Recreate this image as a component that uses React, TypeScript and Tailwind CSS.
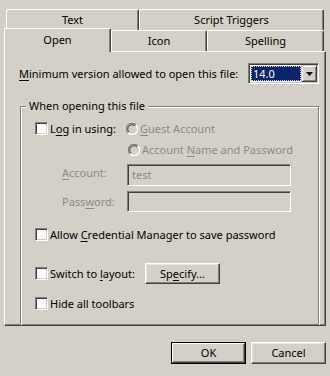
import React from "react";

const FONT = { fontFamily: '"Noto Sans", "Liberation Sans", Arial, sans-serif' };

function U({ children }: { children: React.ReactNode }) {
  return <span className="underline underline-offset-[2px] decoration-[1px]">{children}</span>;
}

function Tab({ w, label }: { w: string; label: string }) {
  return (
    <div className={`${w} h-full flex items-center justify-center border-t border-l border-white border-r border-r-[#404040] rounded-t-[2px] shadow-[inset_-1px_0_#808080] bg-[#d4d0c8]`}>
      <span className="leading-none -mt-[2px]">{label}</span>
    </div>
  );
}

function Check() {
  return (
    <div className="w-[13px] h-[13px] shrink-0 bg-white border-t border-l border-[#808080] border-r border-b border-r-white border-b-white shadow-[inset_1px_1px_#404040,inset_-1px_-1px_#d4d0c8]" />
  );
}

function Radio() {
  return (
    <svg width="12" height="12" viewBox="0 0 12 12" className="shrink-0">
      <circle cx="6" cy="6" r="5.5" fill="#d4d0c8" />
      <path d="M10 2 A5.5 5.5 0 0 0 2 10" stroke="#808080" strokeWidth="1.2" fill="none" />
      <path d="M9 3 A4.2 4.2 0 0 0 3 9" stroke="#404040" strokeWidth="1" fill="none" />
      <path d="M2 10 A5.5 5.5 0 0 0 10 2" stroke="#ffffff" strokeWidth="1.2" fill="none" />
    </svg>
  );
}

function Sunken({ className, children }: { className: string; children?: React.ReactNode }) {
  return (
    <div
      className={`${className} shrink-0 border-t border-l border-[#808080] border-r border-b border-r-white border-b-white shadow-[inset_1px_1px_#404040,inset_-1px_-1px_#d4d0c8]`}
    >
      {children}
    </div>
  );
}

function Button({ className, children, def }: { className: string; children: React.ReactNode; def?: boolean }) {
  if (def) {
    return (
      <div className={`${className} border border-black bg-[#d4d0c8] flex`}>
        <div className="flex-1 flex items-center justify-center border-t border-l border-white border-r border-b border-r-[#404040] border-b-[#404040] shadow-[inset_-1px_-1px_#808080]">
          <span className="leading-none -mt-[1px]">{children}</span>
        </div>
      </div>
    );
  }
  return (
    <div
      className={`${className} flex items-center justify-center bg-[#d4d0c8] border-t border-l border-white border-r border-b border-r-[#404040] border-b-[#404040] shadow-[inset_-1px_-1px_#808080,inset_1px_1px_#e8e6e0]`}
    >
      <span className="leading-none -mt-[1px]">{children}</span>
    </div>
  );
}

export default function App() {
  return (
    <div className="w-[330px] h-[376px] bg-[#d4d0c8] overflow-hidden text-[11px] text-black relative" style={FONT}>
      <div className="pt-[9px]">
        {/* back tab row */}
        <div className="flex pl-[6px] h-[21px]">
          <Tab w="w-[133px]" label="Text" />
          <Tab w="w-[185px]" label="Script Triggers" />
        </div>
        {/* front tab row */}
        <div className="flex pl-[4px] h-[21px] relative z-10">
          <div className="w-[107px] h-[24px] -mt-[2px] flex items-center justify-center border-t border-l border-white border-r border-r-[#404040] rounded-t-[2px] shadow-[inset_-1px_0_#808080] bg-[#d4d0c8]">
            <span className="leading-none -mt-[3px]">Open</span>
          </div>
          <Tab w="w-[96px]" label="Icon" />
          <Tab w="w-[117px]" label="Spelling" />
        </div>
        {/* panel */}
        <div className="ml-[4px] w-[322px] h-[275px] border-t border-l border-white border-r border-b border-r-[#404040] border-b-[#404040] shadow-[inset_-1px_-1px_#808080] overflow-hidden">
          <div className="flex items-center pl-[14px] mt-[11px] h-[21px]">
            <span className="w-[229px] leading-none -mt-[1px] whitespace-nowrap">
              <U>M</U>inimum version allowed to open this file:
            </span>
            <Sunken className="w-[71px] h-[21px] bg-white flex p-[1px]">
              <div className="flex-1 flex items-center bg-white p-[1px] pr-0">
                <div className="flex-1 h-[15px] bg-[#0a246a] text-white flex items-center pl-[2px] outline-dotted outline-1 outline-[#d4d0c8] -outline-offset-1 leading-none">
                  14.0
                </div>
              </div>
              <div className="w-[16px] h-full bg-[#d4d0c8] flex items-center justify-center border-t border-l border-[#d4d0c8] border-r border-b border-r-[#404040] border-b-[#404040] shadow-[inset_1px_1px_#fff,inset_-1px_-1px_#808080]">
                <svg width="7" height="4" viewBox="0 0 7 4">
                  <path d="M0 0 H7 L3.5 4 Z" fill="#000" />
                </svg>
              </div>
            </Sunken>
          </div>

          {/* group box */}
          <div className="relative ml-[15px] mr-[6px] mt-[22px] h-[240px] border border-[#808080] shadow-[inset_1px_1px_#fff,1px_1px_#fff]">
            <div className="absolute -top-[9px] left-[5px] px-[3px] bg-[#d4d0c8] leading-[16px]">When opening this file</div>

            <div className="flex items-center h-[13px] mt-[15px] pl-[14px]">
              <Check />
              <span className="w-[78px] pl-[2px] leading-none -mt-[1px] whitespace-nowrap">
                L<U>o</U>g in using:
              </span>
              <Radio />
              <span className="pl-[2px] text-[#8a8a8a] leading-none -mt-[1px]">
                <U>G</U>uest Account
              </span>
            </div>

            <div className="flex items-center h-[13px] mt-[8px] pl-[107px]">
              <Radio />
              <span className="pl-[2px] text-[#8a8a8a] leading-none -mt-[1px]">
                Account <U>N</U>ame and Password
              </span>
            </div>

            <div className="flex items-start h-[21px] mt-[8px] pl-[41px]">
              <span className="w-[65px] text-[#8a8a8a] leading-none pt-[3px]">
                <U>A</U>ccount:
              </span>
              <Sunken className="w-[164px] h-[22px] bg-[#d4d0c8] flex items-center pl-[4px] text-[#8a8a8a]">
                <span className="leading-none -mt-[1px]">test</span>
              </Sunken>
            </div>

            <div className="flex items-center h-[21px] mt-[6px] pl-[41px]">
              <span className="w-[65px] text-[#8a8a8a] leading-none -mt-[1px]">
                Pass<U>w</U>ord:
              </span>
              <Sunken className="w-[164px] h-[21px] bg-[#d4d0c8]" />
            </div>

            <div className="flex items-center h-[13px] mt-[16px] pl-[14px]">
              <Check />
              <span className="pl-[2px] leading-none -mt-[1px] whitespace-nowrap">
                Allow <U>C</U>redential Manager to save password
              </span>
            </div>

            <div className="flex items-center h-[21px] mt-[22px] pl-[14px]">
              <Check />
              <span className="w-[97px] pl-[2px] leading-none -mt-[1px] whitespace-nowrap">
                Switch to <U>l</U>ayout:
              </span>
              <Button className="w-[75px] h-[21px]">
                Sp<U>e</U>cify...
              </Button>
            </div>

            <div className="flex items-center h-[13px] mt-[13px] pl-[14px]">
              <Check />
              <span className="pl-[2px] leading-none -mt-[1px] whitespace-nowrap">Hide all toolbars</span>
            </div>
          </div>
        </div>

        <div className="flex justify-end gap-[5px] pr-[4px] mt-[16px]">
          <Button className="w-[75px] h-[22px]" def>
            OK
          </Button>
          <Button className="w-[75px] h-[22px]">Cancel</Button>
        </div>
      </div>
    </div>
  );
}
